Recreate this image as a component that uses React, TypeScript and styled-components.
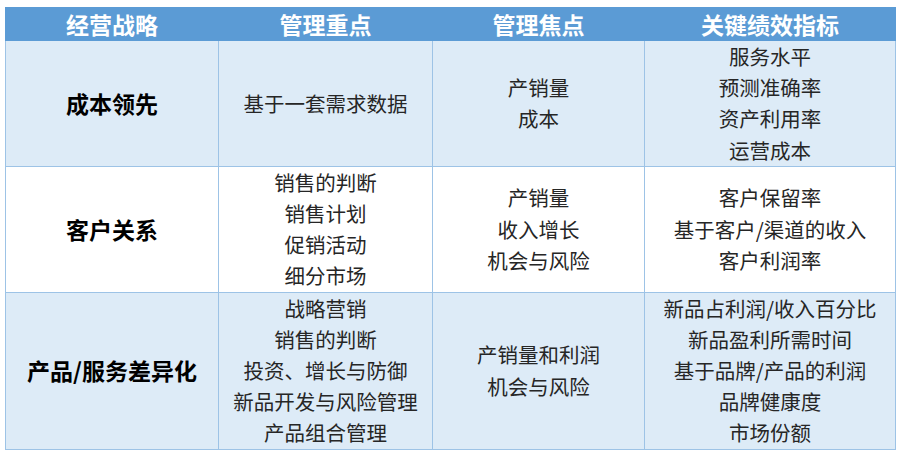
import React from 'react';
import styled, {createGlobalStyle} from 'styled-components';

const GlobalStyle = createGlobalStyle`
  body {
    margin: 0;
    background: #ffffff;
    font-family: "Noto Sans CJK SC", "Noto Sans", sans-serif;
  }
`;

const Page = styled.div`
  padding: 7px 6px 0 5px;
`;

const Table = styled.table`
  width: 890px;
  border-collapse: collapse;
  table-layout: fixed;
`;

const HeadCell = styled.th`
  height: 32px;
  padding: 0;
  background: #5b9bd5;
  color: #ffffff;
  font-size: 23px;
  font-weight: 700;
  line-height: 32px;
  text-align: center;
  border: 1px solid #5b9bd5;
`;

const Row = styled.tr<{ $shaded: boolean }>`
  background: ${p => (p.$shaded ? '#ddebf7' : '#ffffff')};
`;

const Cell = styled.td<{ $strong?: boolean }>`
  padding: 0;
  border: 1px solid #9dc3e6;
  text-align: center;
  vertical-align: middle;
  color: ${p => (p.$strong ? '#000000' : '#262626')};
  font-size: ${p => (p.$strong ? '23px' : '20.5px')};
  font-weight: ${p => (p.$strong ? 700 : 400)};
  line-height: 31.2px;
`;

const Line = styled.div`
  white-space: nowrap;
`;

const rows = [
  {
    strategy: '成本领先',
    focus: ['基于一套需求数据'],
    points: ['产销量', '成本'],
    kpi: ['服务水平', '预测准确率', '资产利用率', '运营成本'],
  },
  {
    strategy: '客户关系',
    focus: ['销售的判断', '销售计划', '促销活动', '细分市场'],
    points: ['产销量', '收入增长', '机会与风险'],
    kpi: ['客户保留率', '基于客户/渠道的收入', '客户利润率'],
  },
  {
    strategy: '产品/服务差异化',
    focus: ['战略营销', '销售的判断', '投资、增长与防御', '新品开发与风险管理', '产品组合管理'],
    points: ['产销量和利润', '机会与风险'],
    kpi: ['新品占利润/收入百分比', '新品盈利所需时间', '基于品牌/产品的利润', '品牌健康度', '市场份额'],
  },
];

const Lines = ({items}: {items: string[]}) => (
  <>
    {items.map(t => (
      <Line key={t}>{t}</Line>
    ))}
  </>
);

export default function App() {
  return (
    <>
      <GlobalStyle />
      <Page>
        <Table>
          <colgroup>
            <col style={{width: 213}} />
            <col style={{width: 214}} />
            <col style={{width: 212}} />
            <col style={{width: 251}} />
          </colgroup>
          <thead>
            <tr>
              <HeadCell>经营战略</HeadCell>
              <HeadCell>管理重点</HeadCell>
              <HeadCell>管理焦点</HeadCell>
              <HeadCell>关键绩效指标</HeadCell>
            </tr>
          </thead>
          <tbody>
            {rows.map((r, i) => (
              <Row key={r.strategy} $shaded={i % 2 === 0}>
                <Cell $strong>{r.strategy}</Cell>
                <Cell><Lines items={r.focus} /></Cell>
                <Cell><Lines items={r.points} /></Cell>
                <Cell><Lines items={r.kpi} /></Cell>
              </Row>
            ))}
          </tbody>
        </Table>
      </Page>
    </>
  );
}
